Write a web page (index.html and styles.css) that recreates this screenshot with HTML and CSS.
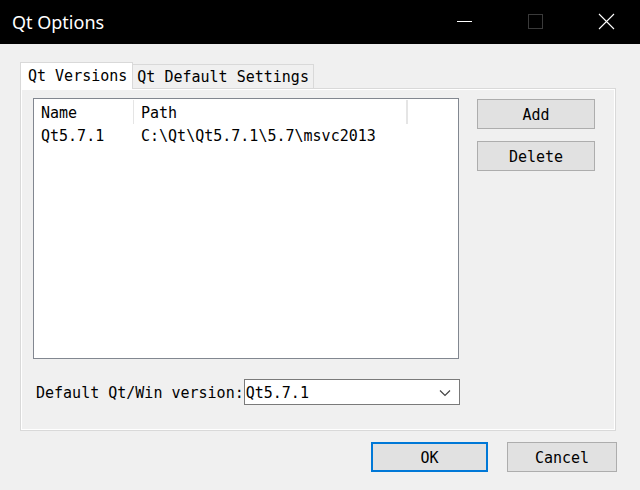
FILE: index.html
```html
<!DOCTYPE html>
<html lang="en">
<head>
    <meta charset="UTF-8">
    <title>Qt Options</title>
    <link rel="stylesheet" href="styles.css">
</head>
<body>
    <div class="window">
        <div class="titlebar">
            <span class="title">Qt Options</span>
            <div class="controls">
                <svg class="ctl" width="46" height="44" viewBox="0 0 46 44"><path d="M16 21.5h15" stroke="#fff" stroke-width="1"/></svg>
                <svg class="ctl" width="46" height="44" viewBox="0 0 46 44"><rect x="16.5" y="14.5" width="14" height="14" fill="none" stroke="#3a3a3a" stroke-width="1"/></svg>
                <svg class="ctl" width="46" height="44" viewBox="0 0 46 44"><path d="M16 14l15 15M31 14l-15 15" stroke="#fff" stroke-width="1.1"/></svg>
            </div>
        </div>
        <div class="content">
            <div class="tabs">
                <div class="tab active">Qt Versions</div>
                <div class="tab">Qt Default Settings</div>
            </div>
            <div class="pane">
                <div class="pane-top">
                    <div class="list">
                        <div class="list-head">
                            <div class="col c1">Name</div>
                            <div class="col c2">Path</div>
                            <div class="col c3"></div>
                        </div>
                        <div class="list-row">
                            <div class="col c1">Qt5.7.1</div>
                            <div class="col c2">C:\Qt\Qt5.7.1\5.7\msvc2013</div>
                        </div>
                    </div>
                    <div class="side">
                        <button class="btn">Add</button>
                        <button class="btn">Delete</button>
                    </div>
                </div>
                <div class="version-row">
                    <span class="label">Default Qt/Win version:</span>
                    <div class="combo">
                        <span>Qt5.7.1</span>
                        <svg width="12" height="8" viewBox="0 0 12 8"><path d="M1 1.5l5 5 5-5" fill="none" stroke="#444" stroke-width="1.2"/></svg>
                    </div>
                </div>
            </div>
            <div class="footer">
                <button class="btn ok">OK</button>
                <button class="btn cancel">Cancel</button>
            </div>
        </div>
    </div>
</body>
</html>
```

FILE: styles.css
```css
body {
    margin: 0;
    background-color: #f0f0f0;
    font-family: "DejaVu Sans Mono", "Liberation Mono", monospace;
    font-size: 15px;
    color: #000;
}
.window {
    width: 640px;
    height: 490px;
    display: flex;
    flex-direction: column;
}
.titlebar {
    height: 44px;
    background-color: #000;
    display: flex;
    align-items: center;
    justify-content: space-between;
}
.title {
    font-family: "Noto Sans", "Open Sans", sans-serif;
    font-size: 18px;
    color: #fff;
    padding-left: 12px;
    margin-top: -1px;
}
.controls {
    display: flex;
    margin-right: 11px;
}
.ctl {
    display: block;
    margin-left: 25px;
}
.content {
    padding: 18px 24px 0 20px;
}
.tabs {
    display: flex;
    align-items: flex-end;
    position: relative;
    z-index: 1;
    margin-bottom: -1px;
}
.tab {
    height: 23px;
    line-height: 25px;
    padding: 0 4px 0 4px;
    border: 1px solid #d9d9d9;
    border-left: none;
    background-color: #f0f0f0;
    white-space: nowrap;
}
.tab.active {
    height: 26px;
    line-height: 27px;
    padding: 0 5px 0 7px;
    border-left: 1px solid #d9d9d9;
    border-bottom: none;
    background-color: #fff;
}
.pane {
    border: 1px solid #d9d9d9;
    box-shadow: inset 1px 1px 0 #fff, inset -1px -1px 0 #fff;
    padding: 9px 0 0 12px;
    box-sizing: border-box;
    height: 343px;
}
.pane-top {
    display: flex;
    align-items: flex-start;
}
.list {
    width: 426px;
    height: 261px;
    box-sizing: border-box;
    border: 1px solid #828790;
    background-color: #fff;
}
.list-head, .list-row {
    display: flex;
}
.list-head {
    height: 24px;
    margin-top: 1px;
}
.list-row {
    height: 22px;
}
.col {
    padding-left: 7px;
    white-space: nowrap;
    box-sizing: border-box;
}
.list-head .col {
    line-height: 26px;
    height: 24px;
    border-right: 1px solid #e5e5e5;
}
.list-head .c3 {
    width: 0;
    padding: 0;
}
.list-row .col {
    line-height: 24px;
}
.c1 {
    width: 100px;
}
.c2 {
    width: 273px;
}
.side {
    display: flex;
    flex-direction: column;
    gap: 12px;
    margin-left: 18px;
    margin-top: 1px;
}
.btn {
    font-family: "DejaVu Sans Mono", "Liberation Mono", monospace;
    font-size: 15px;
    color: #000;
    width: 118px;
    height: 30px;
    padding: 2px 0 0 0;
    background-color: #e1e1e1;
    border: 1px solid #adadad;
}
.version-row {
    display: flex;
    align-items: center;
    margin-top: 20px;
    padding-left: 3px;
}
.label {
    padding-top: 2px;
}
.combo {
    width: 216px;
    height: 26px;
    box-sizing: border-box;
    border: 1px solid #7a7a7a;
    background-color: #fff;
    display: flex;
    align-items: center;
    justify-content: space-between;
    padding: 2px 8px 0 1px;
}
.footer {
    display: flex;
    justify-content: flex-end;
    gap: 19px;
    margin-top: 11px;
    margin-right: -1px;
}
.ok {
    width: 117px;
    border: 2px solid #0078d7;
}
.cancel {
    width: 110px;
}
```
